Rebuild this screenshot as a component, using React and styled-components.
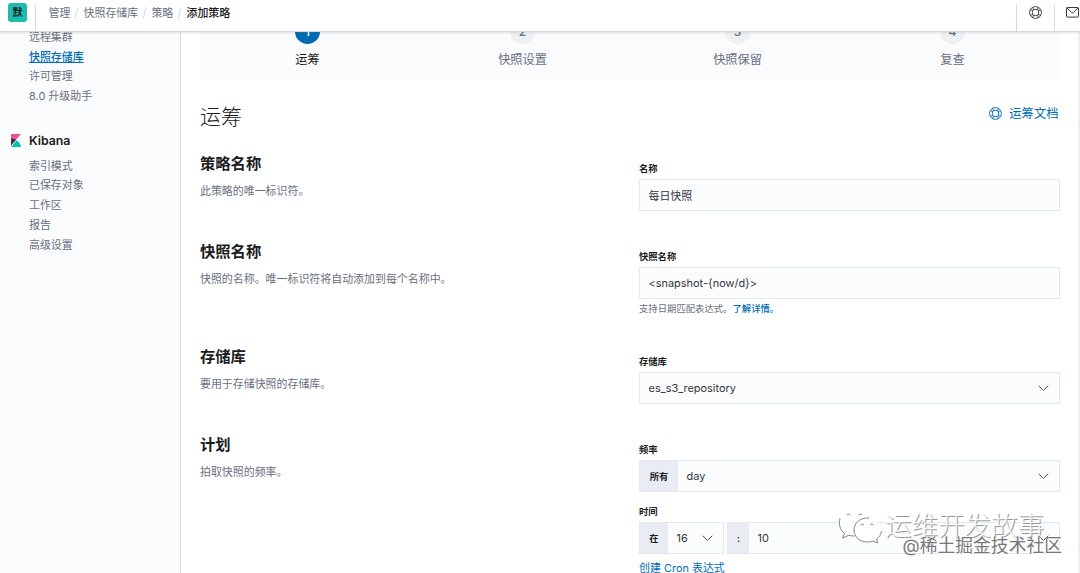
import React from 'react';
import styled, { createGlobalStyle } from 'styled-components';

const crumbs = ['管理', '快照存储库', '策略', '添加策略'];
const esLinks = ['远程集群', '快照存储库', '许可管理', '8.0 升级助手'];
const kibanaLinks = ['索引模式', '已保存对象', '工作区', '报告', '高级设置'];
const steps = ['运筹', '快照设置', '快照保留', '复查'];

const HelpIcon = ({ size = 14 }) => (
  <svg width={size} height={size} viewBox="0 0 16 16" fill="none" stroke="currentColor" strokeWidth="1.15">
    <circle cx="8" cy="8" r="7.300" />
    <path d="M5.500 4.700a5.500 5.500 0 0 1 5 0l.8.8a5.500 5.500 0 0 1 0 5l-.8.8a5.500 5.500 0 0 1-5 0l-.8-.8a5.500 5.500 0 0 1 0-5z" />
    <path d="M5.500 4.700L4.600 1.600M10.500 4.700l.9-3.100M5.500 11.300l-.9 3.100M10.500 11.300l.9 3.100M4.700 5.500L1.600 4.600M4.700 10.500l-3.100.9M11.300 5.500l3.100-.9M11.300 10.500l3.100.9" />
  </svg>
);

const MailIcon = () => (
  <svg width="13" height="11" viewBox="0 0 13 11" fill="none" stroke="currentColor">
    <rect x="0.5" y="0.5" width="12" height="9.6" rx="0.8" />
    <path d="M1 1l4.4 4.3a1.6 1.6 0 0 0 2.2 0L12 1" />
  </svg>
);

const KibanaLogo = () => (
  <svg width="10" height="13" viewBox="0 0 10 13">
    <path d="M0 0h10L0 11.4z" fill="#f04e98" />
    <path d="M0 4.4c1.9 0 3.6.5 5.1 1.3L0 11.6z" fill="#343741" />
    <path d="M5.7 6.2C8 7.7 9.5 10 10 13H.1z" fill="#00bfb3" />
  </svg>
);

const Chevron = () => (
  <svg width="11" height="7" viewBox="0 0 11 7" fill="none" stroke="#4a4d57" strokeLinecap="round">
    <path d="M1 1l4.5 4.4L10 1" />
  </svg>
);

const ChatLogo = () => (
  <svg width="44" height="34" viewBox="0 0 44 34" fill="none" stroke="#858585">
    <path d="M17 1C8 1 1 6 1 13.500c0 4.300 1.800 7.500 5.500 10L4.500 28l6-3c2 .5 4 .8 6 .8L31 8C29 4 23 1 17 1z" fill="#fff" fillOpacity="0.8" stroke="none" />
    <path d="M2 8.500c-1.600 5.500-.2 11 4.500 15L4.500 28l6-2.700c2 .5 4 .7 6 .7" />
    <path d="M29.500 8C22 8 16 13 16 20s6 12.500 13.500 12.500c2 0 3.800-.4 5.500-1l4.500 2-.8-4c3-2.300 4.800-5.500 4.800-9.500 0-7-6.500-12-14-12z" fill="#fff" fillOpacity="0.8" stroke="none" />
    <path d="M31 8C22 7.500 16 13 16 20s6 12 13.500 12c2 0 3.800-.4 5.500-1l4.500 2-.8-4c2.500-2 4.300-4.500 4.800-8" />
    <path d="M9 5q1.700-2.200 3.400 0M20.500 5q1.700-2.200 3.400 0M22.500 15q1.700-2.200 3.400 0M32 15q1.700-2.200 3.400 0" />
  </svg>
);

const Setting = ({ title, text, height, children }) => (
  <Row $height={height}>
    <div>
      <RowTitle>{title}</RowTitle>
      <RowText>{text}</RowText>
    </div>
    <Fields>{children}</Fields>
  </Row>
);

const App = () => (
  <>
    <GlobalStyle />
    <Page>
      <Header>
        <SpaceCell><Space>默</Space></SpaceCell>
        <Crumbs>
          {crumbs.map(c => <Crumb key={c}>{c}</Crumb>)}
        </Crumbs>
        <HeaderButton $width={38}><HelpIcon size={13} /></HeaderButton>
        <HeaderButton $width={26}><MailIcon /></HeaderButton>
      </Header>
      <Body>
        <SideNav>
          {esLinks.map(l => <NavLink key={l} $active={l === '快照存储库'}>{l}</NavLink>)}
          <NavHeading><KibanaLogo />Kibana</NavHeading>
          {kibanaLinks.map(l => <NavLink key={l}>{l}</NavLink>)}
        </SideNav>
        <Main>
          <Steps>
            {steps.map((s, i) => (
              <Step key={s} $active={i === 0}>
                <StepNumber $active={i === 0}>{i + 1}</StepNumber>
                {s}
              </Step>
            ))}
          </Steps>
          <TitleBar>
            <Title>运筹</Title>
            <DocsLink><HelpIcon size={13} />运筹文档</DocsLink>
          </TitleBar>
          <Setting title="策略名称" text="此策略的唯一标识符。" height={88}>
            <Label>名称</Label>
            <Control><Value>每日快照</Value></Control>
          </Setting>
          <Setting title="快照名称" text="快照的名称。唯一标识符将自动添加到每个名称中。" height={105}>
            <Label>快照名称</Label>
            <Control><Value>&lt;snapshot-{'{now/d}'}&gt;</Value></Control>
            <Help>支持日期匹配表达式。<a>了解详情。</a></Help>
          </Setting>
          <Setting title="存储库" text="要用于存储快照的存储库。" height={88}>
            <Label>存储库</Label>
            <Control><Value>es_s3_repository</Value><Chevron /></Control>
          </Setting>
          <Setting title="计划" text="拍取快照的频率。" height={140}>
            <Label>频率</Label>
            <Control>
              <Prepend $width={38}>所有</Prepend>
              <Value>day</Value>
              <Chevron />
            </Control>
            <Label $spaced>时间</Label>
            <TimeRow>
              <Control>
                <Prepend $width={28}>在</Prepend>
                <Value>16</Value>
                <Chevron />
              </Control>
              <Control>
                <Prepend $width={21}>:</Prepend>
                <Value>10</Value>
                <Chevron />
              </Control>
            </TimeRow>
            <CronLink>创建 Cron 表达式</CronLink>
          </Setting>
        </Main>
        <ScrollEdge />
      </Body>
      <BrandMark><ChatLogo />运维开发故事</BrandMark>
      <SiteMark>@稀土掘金技术社区</SiteMark>
    </Page>
  </>
);

export default App;

const GlobalStyle = createGlobalStyle`
* {
  box-sizing: border-box;
}

body {
  margin: 0;
  overflow: hidden;
  background: #fff;
  color: #343741;
  font-family: Inter, "Noto Sans CJK SC", sans-serif;
  font-size: 10.95px;
}

svg {
  display: block;
  flex-shrink: 0;
}
`;

const Page = styled.div`
position: relative;
display: flex;
flex-direction: column;
width: 1080px;
height: 573px;
overflow: hidden;
`;

const Header = styled.header`
display: flex;
flex-shrink: 0;
height: 32px;
border-bottom: 1px solid #d3dae6;
box-shadow: 0 1px 2px rgba(100, 110, 130, 0.2);
background: #fff;
z-index: 1;
`;

const SpaceCell = styled.div`
width: 36px;
padding: 3px 0 0 8px;
border-right: 1px solid #d3dae6;
border-image: linear-gradient(transparent 6px, #d3dae6 6px) 1;
`;

const Space = styled.div`
width: 19px;
height: 19px;
border-radius: 3px;
background: #1dbcac;
color: #10151c;
font-size: 10px;
font-weight: 700;
line-height: 19px;
text-align: center;
`;

const Crumbs = styled.nav`
display: flex;
flex: 1;
padding-left: 12.500px;
line-height: 27px;
`;

const Crumb = styled.span`
color: #69707d;
white-space: nowrap;

&:not(:last-child)::after {
  content: '';
  display: inline-block;
  width: 1px;
  height: 12px;
  margin: 0 6.1px;
  background: #d3dae6;
  transform: rotate(15deg);
  vertical-align: -2px;
}

&:last-child {
  color: #1a1c21;
  font-weight: 500;
}
`;

const HeaderButton = styled.div`
display: flex;
justify-content: center;
width: ${props => props.$width}px;
padding-top: 6px;
border-left: 1px solid #d3dae6;
border-image: linear-gradient(transparent 6px, #d3dae6 6px) 1;

&:last-child {
  justify-content: flex-start;
  padding: 7px 0 0 11px;
}
`;

const Body = styled.div`
display: flex;
flex: 1;
min-height: 0;
`;

const SideNav = styled.aside`
width: 181px;
padding: 0 0 0 29px;
border-right: 1px solid #d3dae6;
background: #fafbfd;
`;

const NavLink = styled.div`
height: 19.7px;
line-height: 19.7px;
color: ${props => props.$active ? '#006bb4' : '#69707d'};
font-weight: ${props => props.$active ? 500 : 400};
text-decoration: ${props => props.$active ? 'underline' : 'none'};

&:first-child {
  margin-top: -4px;
}
`;

const NavHeading = styled.div`
display: flex;
align-items: center;
gap: 8px;
height: 22px;
margin: 22.500px 0 5.500px -18px;
color: #1a1c21;
font-size: 12.3px;
font-weight: 600;
`;

const Main = styled.main`
flex: 1;
padding: 0 18px 0 19px;
`;

const Steps = styled.div`
display: grid;
grid-template-columns: repeat(4, 215px);
height: 48px;
overflow: hidden;
background: #fafbfd;
`;

const Step = styled.div`
display: flex;
flex-direction: column;
align-items: center;
color: ${props => props.$active ? '#1a1c21' : '#69707d'};
font-size: 12.2px;
line-height: 18px;
`;

const StepNumber = styled.div`
width: 25px;
height: 25px;
margin: -13px 0 7px;
border-radius: 50%;
background: ${props => props.$active ? '#006bb4' : '#eff0f3'};
color: ${props => props.$active ? '#fff' : '#69707d'};
font-size: 12px;
font-weight: 500;
line-height: 25px;
text-align: center;
`;

const TitleBar = styled.div`
display: flex;
justify-content: space-between;
height: 73px;
padding-top: 22px;
`;

const Title = styled.h1`
margin: 0;
color: #1a1c21;
font-size: 21px;
font-weight: 300;
line-height: 30px;
`;

const DocsLink = styled.a`
display: flex;
align-items: center;
gap: 7px;
height: 22px;
margin-right: 1.500px;
color: #006bb4;
font-size: 12.3px;
`;

const Row = styled.section`
display: grid;
grid-template-columns: 439px 421px;
height: ${props => props.$height}px;
`;

const RowTitle = styled.h2`
margin: 0 0 7px;
color: #1a1c21;
font-size: 15.3px;
font-weight: 600;
line-height: 22px;
`;

const RowText = styled.p`
margin: 0;
color: #69707d;
line-height: 18px;
`;

const Fields = styled.div`
padding-top: 9px;
`;

const Label = styled.div`
height: 14px;
margin: ${props => props.$spaced ? '13px 0 3px' : '0 0 3px'};
color: #1a1c21;
font-size: 9.3px;
font-weight: 600;
line-height: 14px;
`;

const Control = styled.div`
display: flex;
align-items: center;
height: 32px;
padding-right: 10px;
border: 1px solid #e4e8ef;
background: #fbfcfd;
`;

const Value = styled.span`
flex: 1;
padding-left: 8.500px;
`;

const Prepend = styled.span`
width: ${props => props.$width}px;
height: 100%;
background: #e9edf3;
color: #1a1c21;
font-size: 9.3px;
font-weight: 600;
line-height: 31px;
text-align: center;
`;

const Help = styled.div`
margin-top: 3px;
color: #69707d;
font-size: 9.35px;
line-height: 14px;

a {
  color: #006bb4;
  font-weight: 500;
}
`;

const TimeRow = styled.div`
display: grid;
grid-template-columns: 85px 333px;
gap: 3px;
`;

const CronLink = styled.a`
display: block;
margin-top: 6px;
color: #006bb4;
line-height: 16px;
`;

const ScrollEdge = styled.div`
width: 2px;
background: #eceef2;
`;

// watermarks lie over the form
const BrandMark = styled.div`
position: absolute;
left: 838px;
top: 510px;
display: flex;
gap: 3px;
color: rgba(255, 255, 255, 0.9);
font-size: 26.5px;
font-weight: 300;
line-height: 30px;
white-space: nowrap;
text-shadow: 1px 1px 0 #999;
`;

const SiteMark = styled.div`
position: absolute;
right: 18px;
top: 535px;
color: #777;
font-size: 17.8px;
line-height: 22px;
white-space: nowrap;
text-shadow: 0 0 1px #fff, 1px 1px 0 #fff;
`;
